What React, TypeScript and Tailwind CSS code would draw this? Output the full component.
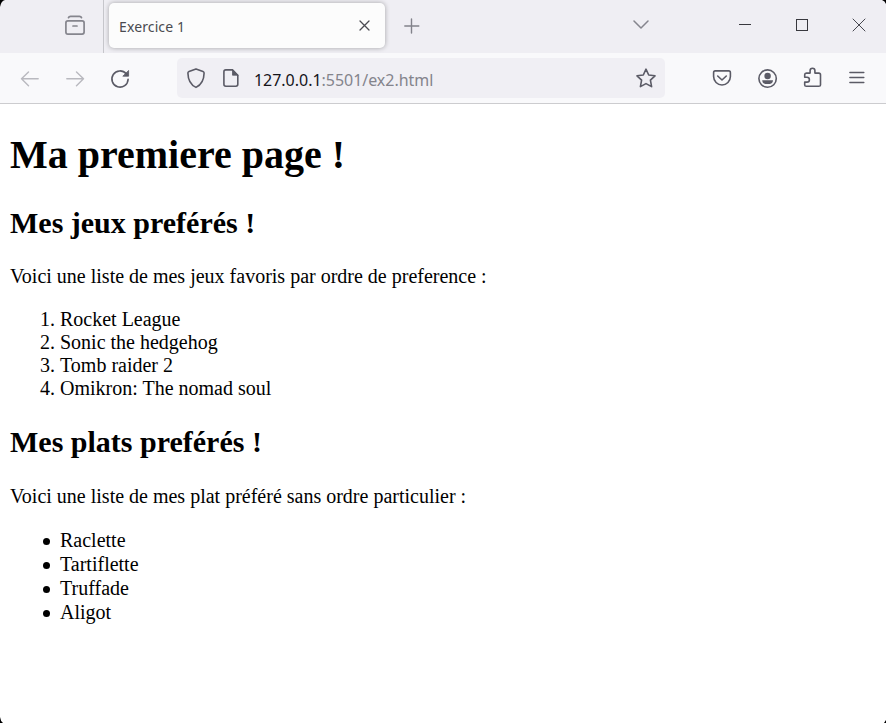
import type { ReactNode } from 'react';

type IconProps = { w?: number; h?: number; className?: string; sw?: number; children: ReactNode };

function Icon({ w = 20, h = 20, className = '', sw = 1.5, children }: IconProps) {
  return (
    <svg
      width={w}
      height={h}
      viewBox={`0 0 ${w} ${h}`}
      fill="none"
      stroke="currentColor"
      strokeWidth={sw}
      strokeLinecap="round"
      strokeLinejoin="round"
      className={`block shrink-0 ${className}`}
    >
      {children}
    </svg>
  );
}

function TabStrip() {
  return (
    <div className="flex h-[53px] bg-[#efeef3] text-[#5b5b66]">
      <div className="flex w-[104px] shrink-0 border-r border-[#c6c6cb] pt-[15px] pl-[65px]">
        <Icon h={21} sw={1.7} className="text-[#85858d]">
          <rect x="0.9" y="5.9" width="18.2" height="13.2" rx="2" />
          <path d="M3.5 2.6 Q4 1.3 5.5 1.3 H14.5 Q16 1.3 16.5 2.6 M8 11 H12" />
        </Icon>
      </div>
      <div className="mt-[3px] ml-[5px] flex h-[45px] w-[276px] shrink-0 items-center rounded-[5px] bg-[#fcfcfc] pl-[10px] shadow-[0_0_5px_rgba(0,0,0,0.32)]">
        <span className="mt-[2px] w-[240px] font-['Noto_Sans',sans-serif] text-[14px] leading-[20px] tracking-[0.12px] text-[#4a4a50]">
          Exercice 1
        </span>
        <Icon w={11} h={11} sw={1.3} className="text-[#4b4b52]">
          <path d="M1 1 L10 10 M10 1 L1 10" />
        </Icon>
      </div>
      <Icon w={16} h={16} sw={1.4} className="mt-[18px] ml-[19px] text-[#82828a]">
        <path d="M7.5 1 V15 M0.8 8 H14.8" />
      </Icon>
      <Icon w={16} h={10} sw={1.5} className="mt-[20px] ml-[213px] text-[#85858d]">
        <path d="M1 1 L8 8 L15 1" />
      </Icon>
      <Icon w={12} h={1} sw={1} className="mt-[24px] ml-[90px] text-[#38383e]">
        <path d="M0 0.5 H12" />
      </Icon>
      <Icon w={12} h={12} sw={1} className="mt-[19px] ml-[45px] text-[#38383e]">
        <rect x="0.5" y="0.5" width="11" height="11" strokeLinejoin="miter" />
      </Icon>
      <Icon w={14} h={14} sw={1} className="mt-[18px] ml-[43.5px] text-[#46464e]">
        <path d="M1 1 L13 13 M13 1 L1 13" />
      </Icon>
    </div>
  );
}

function Toolbar() {
  return (
    <div className="flex h-[51px] border-b border-[#cccccf] bg-[#f9f9fb] text-[#5b5b66]">
      <Icon h={16} sw={1.4} className="mt-[18px] ml-[20px] text-[#b9b9bf]">
        <path d="M18.2 7.8 H1.5 M8.5 0.9 L1.5 7.8 L8.5 14.7" />
      </Icon>
      <Icon h={16} sw={1.4} className="mt-[18px] ml-[25px] text-[#b9b9bf]">
        <path d="M1.8 7.8 H18.5 M11.5 0.9 L18.5 7.8 L11.5 14.7" />
      </Icon>
      <Icon sw={1.6} className="mt-[16px] ml-[25px]">
        <path d="M18.1 10.2 A8.1 8.1 0 1 1 16.2 4.8" />
        <path d="M18.6 1.8 V7.2 H13.2 Z" fill="currentColor" strokeWidth="0.8" />
      </Icon>
      <div className="mt-[5px] ml-[47px] flex h-[40px] w-[488px] shrink-0 rounded-[5px] bg-[#f0eff4]">
        <Icon h={21} sw={1.6} className="mt-[10px] ml-[9px]">
          <path d="M10 0.9 L17 3.4 Q18.1 3.8 18.1 5 C18 12 15.5 16.8 10 19.4 C4.5 16.8 2 12 1.9 5 Q1.9 3.8 3 3.4 Z" />
        </Icon>
        <Icon w={16} h={19} sw={1.6} className="mt-[11px] ml-[17px]">
          <path d="M9.5 0.9 H2.8 Q0.9 0.9 0.9 2.8 V15.3 Q0.9 17.2 2.8 17.2 H12.9 Q14.8 17.2 14.8 15.3 V6.2 Z" />
          <path d="M9.5 0.9 V6.2 H14.8 Z" fill="currentColor" strokeWidth="0.8" />
        </Icon>
        <span className="mt-[10px] ml-[15px] w-[381px] font-['Noto_Sans',sans-serif] text-[16px] leading-[24px] tracking-[-0.03px] text-[#84848c]">
          <span className="text-[#15141a]">127.0.0.1</span>:5501/ex2.html
        </span>
        <Icon w={22} h={21} sw={1.6} className="mt-[10px]">
          <path d="M11 1.2 L13.7 7 L20 7.8 L15.4 12.2 L16.6 18.6 L11 15.6 L5.4 18.6 L6.6 12.2 L2 7.8 L8.3 7 Z" />
        </Icon>
      </div>
      <Icon h={18} sw={1.6} className="mt-[17px] ml-[47px]">
        <path d="M3.2 0.9 H16.8 Q18.4 0.9 18.4 2.7 V6.6 A8.2 8.2 0 0 1 1.6 6.6 V2.7 Q1.6 0.9 3.2 0.9 Z M5.7 6 L10 10 L14.3 6" />
      </Icon>
      <Icon h={20} sw={1.6} className="mt-[16px] ml-[26px]">
        <circle cx="9.6" cy="9.6" r="8.7" />
        <circle cx="9.6" cy="7" r="3.2" fill="currentColor" stroke="none" />
        <path d="M4.2 11.2 H15 Q15 15.1 9.6 15.1 Q4.2 15.1 4.2 11.2 Z" fill="currentColor" stroke="none" />
      </Icon>
      <Icon h={21} sw={1.6} className="mt-[14px] ml-[25px]">
        <path d="M3.3 6.1 H7.1 V3.6 A2.4 2.4 0 0 1 11.9 3.6 V6.1 H15.8 Q17.5 6.1 17.5 7.8 V17.9 Q17.5 19.2 15.8 19.2 H3.3 Q1.7 19.2 1.7 17.9 V15.1 H4 A2.4 2.4 0 0 0 4 10.3 H1.7 V7.8 Q1.7 6.1 3.3 6.1 Z" />
      </Icon>
      <Icon w={16} h={14} sw={1.5} className="mt-[18px] ml-[26px]">
        <path d="M0.9 1.5 H14.8 M0.9 6.5 H14.8 M0.9 11.5 H14.8" />
      </Icon>
    </div>
  );
}

function Bullet({ children }: { children: ReactNode }) {
  return (
    <li className="flex items-center before:mt-[2px] before:mr-[10px] before:h-[7px] before:w-[7px] before:rounded-full before:bg-black before:content-['']">
      {children}
    </li>
  );
}

export default function App() {
  return (
    <div className="relative h-[723px] w-[886px] overflow-hidden bg-white">
      <TabStrip />
      <Toolbar />
      <main className="px-[10px] pt-[28px] font-['Liberation_Serif',serif] text-[20px] leading-[23px] text-black">
        <h1 className="text-[40px] leading-[46px] font-bold">Ma premiere page !</h1>
        <h2 className="mt-[28px] text-[30px] leading-[34px] font-bold">Mes jeux preférés !</h2>
        <p className="mt-[25px]">Voici une liste de mes jeux favoris par ordre de preference :</p>
        <ol className="mt-[20px] list-decimal pl-[50px]">
          <li>Rocket League</li>
          <li>Sonic the hedgehog</li>
          <li>Tomb raider 2</li>
          <li>Omikron: The nomad soul</li>
        </ol>
        <h2 className="mt-[25px] text-[30px] leading-[34px] font-bold">Mes plats preférés !</h2>
        <p className="mt-[26px]">Voici une liste de mes plat préféré sans ordre particulier :</p>
        <ul className="mt-[20px] pl-[33px] leading-[24px]">
          <Bullet>Raclette</Bullet>
          <Bullet>Tartiflette</Bullet>
          <Bullet>Truffade</Bullet>
          <Bullet>Aligot</Bullet>
        </ul>
      </main>
      <svg width="5" height="7" viewBox="0 0 5 7" className="absolute top-0 left-0">
        <path d="M0 0 H5 Q1 1 0 7 Z" />
      </svg>
      <svg width="4" height="4" viewBox="0 0 4 4" className="absolute top-0 right-0">
        <path d="M0 0 H4 V4 Q3 1 0 0 Z" />
      </svg>
      <svg width="3" height="6" viewBox="0 0 3 6" className="absolute bottom-0 left-0">
        <path d="M0 0 Q0.5 4 3 6 H0 Z" />
      </svg>
      <svg width="2" height="3" viewBox="0 0 2 3" className="absolute right-0 bottom-0">
        <path d="M2 0 V3 H0 Z" />
      </svg>
    </div>
  );
}
